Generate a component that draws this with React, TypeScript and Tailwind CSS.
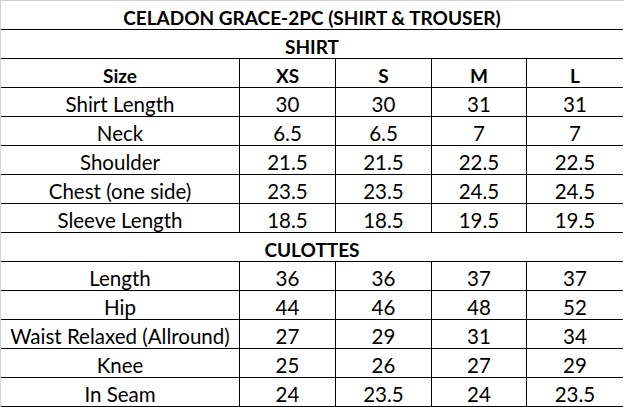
import React from "react";

const shirt: [string, string, string, string, string][] = [
  ["Shirt Length", "30", "30", "31", "31"],
  ["Neck", "6.5", "6.5", "7", "7"],
  ["Shoulder", "21.5", "21.5", "22.5", "22.5"],
  ["Chest (one side)", "23.5", "23.5", "24.5", "24.5"],
  ["Sleeve Length", "18.5", "18.5", "19.5", "19.5"],
];

const culottes: [string, string, string, string, string][] = [
  ["Length", "36", "36", "37", "37"],
  ["Hip", "44", "46", "48", "52"],
  ["Waist Relaxed (Allround)", "27", "29", "31", "34"],
  ["Knee", "25", "26", "27", "29"],
  ["In Seam", "24", "23.5", "24", "23.5"],
];

function Row({ cells, bold }: { cells: string[]; bold?: boolean }) {
  return (
    <>
      {cells.map((c, i) => (
        <div
          key={i}
          className={`h-[29px] flex items-end justify-center border-b border-black ${
            i < 4 ? "border-r" : ""
          } ${bold ? "font-bold text-[19px] pb-[2px]" : "text-[20.5px] pb-[2px]"}`}
        >
          {c}
        </div>
      ))}
    </>
  );
}

function Span({ text }: { text: string }) {
  return (
    <div className="col-span-5 h-[29px] flex items-end justify-center pb-[2px] border-b border-black font-bold text-[19px]">
      {text}
    </div>
  );
}

export default function App() {
  return (
    <div className="w-[624px] h-[407px] bg-white">
      <div
        className="grid grid-cols-[239px_96px_96px_95px_96px] w-[624px] border-l border-t border-l-[#d0d0d0] border-t-[#d0d0d0] leading-none text-black"
        style={{ fontFamily: "Lato, 'Noto Sans', sans-serif" }}
      >
        <Span text="CELADON GRACE-2PC (SHIRT & TROUSER)" />
        <Span text="SHIRT" />
        <Row cells={["Size", "XS", "S", "M", "L"]} bold />
        {shirt.map((r, i) => (
          <Row key={i} cells={r} />
        ))}
        <Span text="CULOTTES" />
        {culottes.map((r, i) => (
          <Row key={i} cells={r} />
        ))}
      </div>
    </div>
  );
}
